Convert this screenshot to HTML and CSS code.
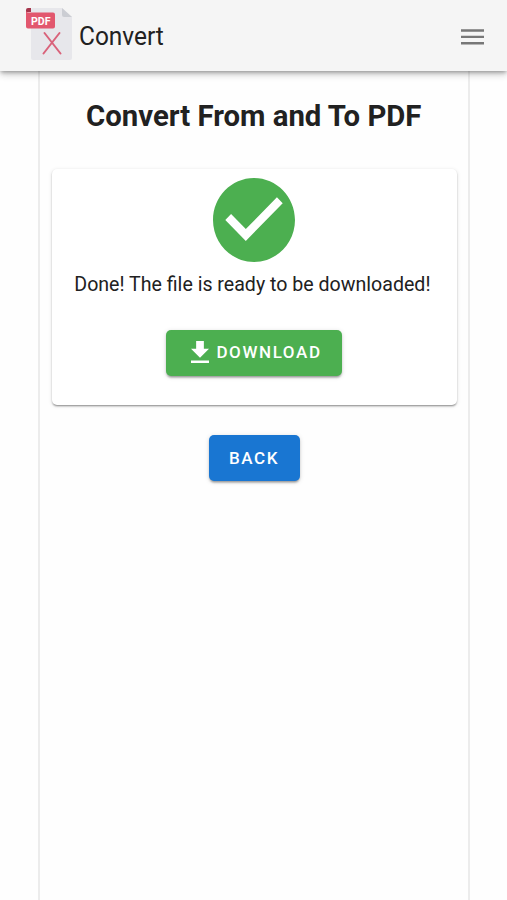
FILE: index.html
```html
<!DOCTYPE html>
<html lang="en">
<head>
<meta charset="utf-8">
<title>Convert</title>
<link rel="stylesheet" href="styles.css">
</head>
<body>
<header class="bar">
  <svg class="logo" width="48" height="54" viewBox="0 0 48 54">
    <path d="M6 2Q6 0 8 0H37L47 9V50Q47 52 45 52H8Q6 52 6 50Z" fill="#e7e7eb"/>
    <path d="M37 0L47 9H39Q37 9 37 7Z" fill="#cbcdd3"/>
    <path d="M1 2Q1 0 3 0H6V4H1Z" fill="#a5364c"/>
    <path d="M1 3Q1.500 4.500 4 4.500H28Q30 4.500 30 6.500V18.500Q30 20.500 28 20.500H3Q1 20.500 1 18.500Z" fill="#e2576e"/>
    <text class="logo-text" x="6" y="16.900" textLength="19.500" lengthAdjust="spacingAndGlyphs">PDF</text>
    <path d="M19.500 25L35.500 45.500M34.500 25L18.500 45.500" fill="none" stroke="#d9627a" stroke-width="2" stroke-linecap="round"/>
  </svg>
  <span class="brand">Convert</span>
  <svg class="menu" width="24" height="18" viewBox="0 0 24 18"><path d="M0 2.500H23M0 8.900H23M0 15.200H23" stroke="#777" stroke-width="2.400"/></svg>
</header>
<main class="panel">
  <h1 class="title">Convert From and To PDF</h1>
  <section class="card">
    <svg class="check" width="82" height="84" viewBox="2 2 20 20" preserveAspectRatio="none"><path fill="#4caf50" d="M12 2C6.500 2 2 6.500 2 12S6.500 22 12 22 22 17.500 22 12 17.500 2 12 2M10 17L5 12L6.410 10.590L10 14.170L17.590 6.580L19 8L10 17Z"/></svg>
    <p class="message">Done! The file is ready to be downloaded!</p>
    <button class="btn download"><svg width="18" height="22" viewBox="5 3 14 17" preserveAspectRatio="none"><path fill="#fff" d="M5 20H19V18H5M19 9H15V3H9V9H5L12 16L19 9Z"/></svg><span>DOWNLOAD</span></button>
  </section>
  <button class="btn back">BACK</button>
</main>
</body>
</html>
```
FILE: styles.css
```css
* { box-sizing: border-box; }
body {
  margin: 0;
  height: 900px;
  overflow: hidden;
  display: flex;
  flex-direction: column;
  background: #fefefe;
  color: #212121;
  font-family: Roboto, "Liberation Sans", sans-serif;
}
.bar {
  position: relative;
  z-index: 1;
  flex: none;
  height: 71px;
  padding: 0 22px 0 25px;
  display: flex;
  align-items: center;
  background: #f5f5f5;
  box-shadow: 0 2px 4px -1px rgba(0,0,0,.32), 0 4px 6px rgba(0,0,0,.12), 0 1px 11px rgba(0,0,0,.1);
}
.logo { margin-top: -1px; }
.logo-text { fill: #fff; font-size: 11.5px; font-weight: 700; }
.brand {
  margin: 1px 0 0 6px;
  font-size: 25.6px;
  white-space: nowrap;
  transform: scaleX(.955);
  transform-origin: 0 50%;
}
.menu { margin: 2px 0 0 auto; }
.panel {
  flex: 1;
  width: 432px;
  margin-left: 38px;
  padding: 25px 12px 0;
  display: flex;
  flex-direction: column;
  align-items: center;
  border: solid #ececec;
  border-width: 0 2px;
}
.title {
  margin: 0;
  font-size: 30.4px;
  line-height: 40px;
  font-weight: 700;
  white-space: nowrap;
  transform: scaleX(.965);
}
.card {
  width: 405px;
  height: 236px;
  margin-top: 33px;
  padding-top: 9px;
  display: flex;
  flex-direction: column;
  align-items: center;
  border-radius: 5px;
  background: #fff;
  box-shadow: 0 2px 2px -1px rgba(0,0,0,.3), 0 1px 2px rgba(0,0,0,.14), 0 1px 4px rgba(0,0,0,.12);
}
.message {
  margin: 7px 0 1px;
  font-size: 20.3px;
  line-height: 30px;
  white-space: nowrap;
  transform: translateX(-2px) scaleX(.966);
}
.btn {
  flex: none;
  height: 46px;
  padding: 0;
  display: flex;
  align-items: center;
  justify-content: center;
  border: 0;
  border-radius: 5px;
  color: #fff;
  font: 500 17px/24px Roboto, "Liberation Sans", sans-serif;
  letter-spacing: 1.6px;
  box-shadow: 0 3px 2px -2px rgba(0,0,0,.22), 0 2px 2px rgba(0,0,0,.16), 0 1px 5px rgba(0,0,0,.14);
}
.download { width: 176px; margin-top: 30px; padding: 0 0 2px 5px; gap: 7px; background: #4caf50; }
.back { width: 91px; margin-top: 30px; background: #1976d2; }
```
